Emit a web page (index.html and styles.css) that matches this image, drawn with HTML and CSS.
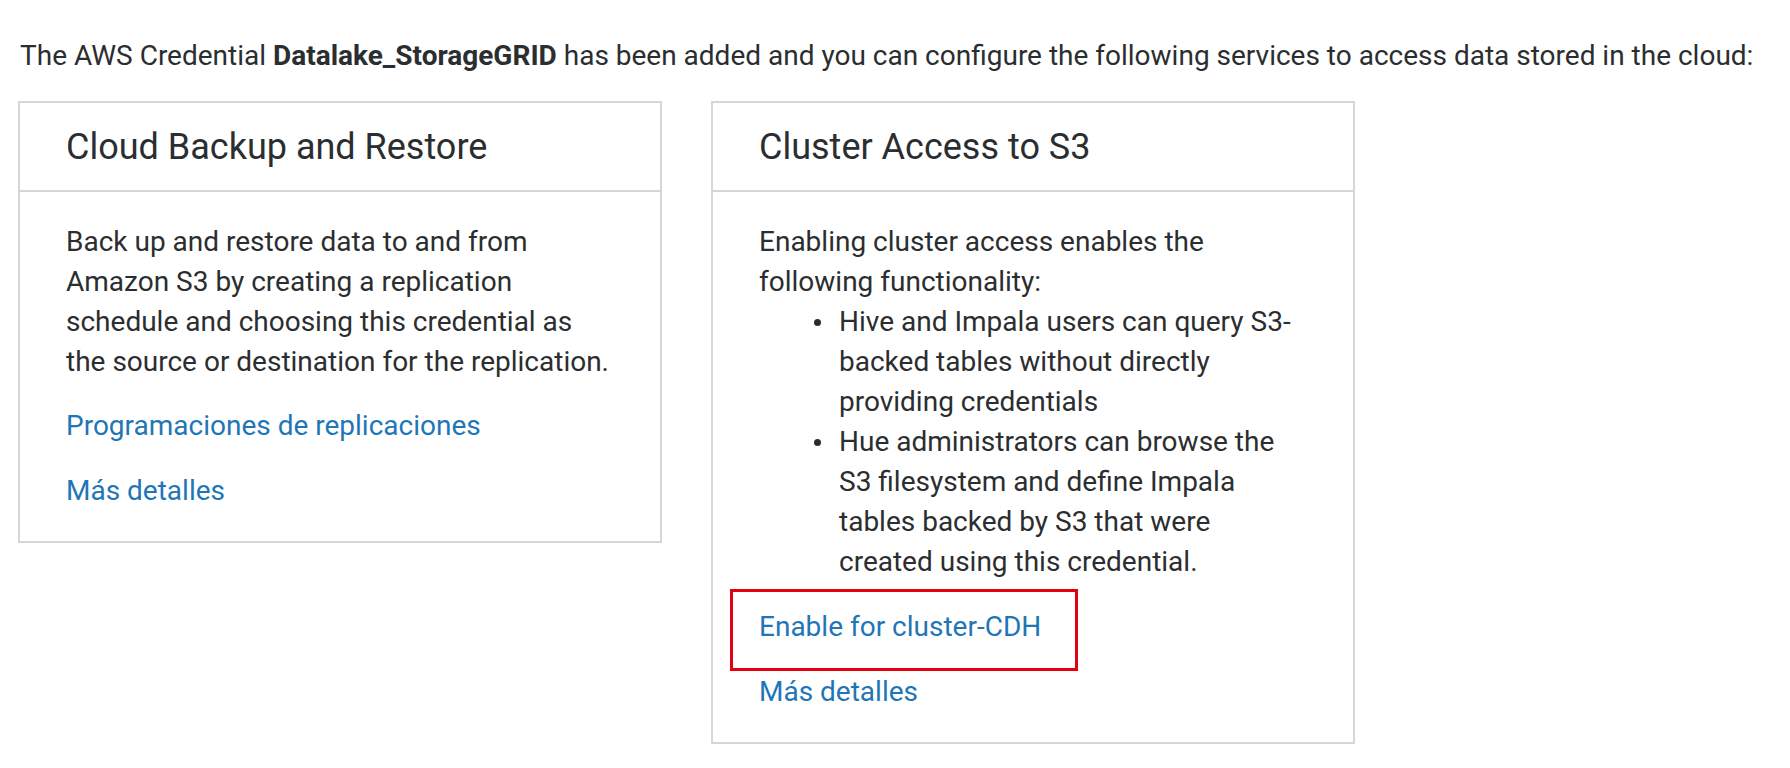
FILE: index.html
```html
<!DOCTYPE html>
<html lang="en">
<head>
<meta charset="utf-8">
<title>AWS Credential added</title>
<link rel="stylesheet" href="styles.css">
</head>
<body>
<main class="page">
  <p class="intro">The AWS Credential <strong>Datalake_StorageGRID</strong> has been added and you can configure the following services to access data stored in the cloud:</p>
  <div class="cards">
    <section class="card">
      <header class="card-header"><h2 class="card-title">Cloud Backup and Restore</h2></header>
      <div class="card-body">
        <p class="card-text">Back up and restore data to and from<br>Amazon S3 by creating a replication<br>schedule and choosing this credential as<br>the source or destination for the replication.</p>
        <div class="card-link"><a href="#">Programaciones de replicaciones</a></div>
        <div class="card-link"><a href="#">Más detalles</a></div>
      </div>
    </section>
    <section class="card">
      <header class="card-header"><h2 class="card-title">Cluster Access to S3</h2></header>
      <div class="card-body">
        <p class="card-text card-text-tight">Enabling cluster access enables the<br>following functionality:</p>
        <ul class="card-list">
          <li>Hive and Impala users can query S3-<br>backed tables without directly<br>providing credentials</li>
          <li>Hue administrators can browse the<br>S3 filesystem and define Impala<br>tables backed by S3 that were<br>created using this credential.</li>
        </ul>
        <div class="card-link highlight"><a href="#">Enable for cluster-CDH</a></div>
        <div class="card-link"><a href="#">Más detalles</a></div>
      </div>
    </section>
  </div>
</main>
</body>
</html>
```
FILE: styles.css
```css
html, body {
  margin: 0;
  padding: 0;
  background: #ffffff;
}
body {
  font-family: Roboto, "Liberation Sans", Arial, sans-serif;
  font-size: 28px;
  line-height: 40px;
  color: #2b2e30;
}
.page {
  padding: 36px 18px 0 20px;
}
.intro {
  margin: 0 0 25px 0;
  white-space: nowrap;
}
.intro strong {
  font-weight: 700;
}
.cards {
  display: flex;
  align-items: flex-start;
  gap: 49px;
  margin-left: -2px;
}
.card {
  width: 644px;
  box-sizing: border-box;
  border: 2px solid #d6d6d6;
  background: #fff;
}
.card-header {
  padding: 26px 46px 25px;
  border-bottom: 2px solid #d6d6d6;
}
.card-title {
  margin: 0;
  font-size: 36px;
  line-height: 36px;
  font-weight: 400;
  color: #2b2e30;
}
.card-body {
  padding: 30px 16px 30px 46px;
}
.card-text {
  margin: 0 0 24px 0;
}
.card-text-tight {
  margin: 0;
}
.card-list {
  margin: 0 0 25px 0;
  padding: 0 0 0 80px;
  list-style: none;
}
.card-list li {
  position: relative;
}
.card-list li::before {
  content: "";
  position: absolute;
  left: -25px;
  top: 17px;
  width: 7px;
  height: 7px;
  border-radius: 50%;
  background: currentColor;
}
.card-link {
  margin-top: 25px;
}
.card-text + .card-link,
.card-list + .card-link {
  margin-top: 0;
}
.card-link a {
  color: #1f76b7;
  text-decoration: none;
}
.highlight {
  position: relative;
}
.highlight::after {
  content: "";
  position: absolute;
  left: -29px;
  top: -18px;
  width: 348px;
  height: 82px;
  box-sizing: border-box;
  border: 3px solid #e3000f;
  pointer-events: none;
}
```
